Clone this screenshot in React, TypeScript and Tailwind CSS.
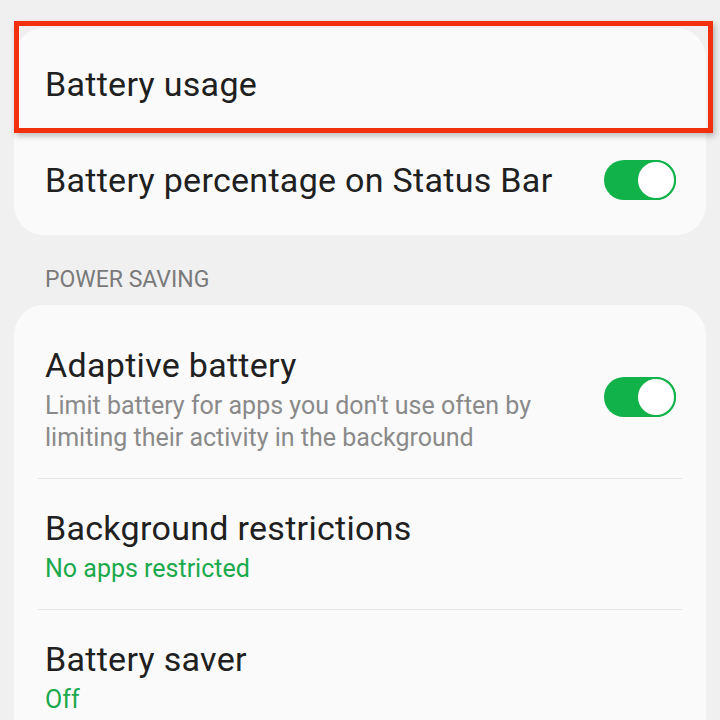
import React from "react";

function Toggle() {
  return (
    <div className="relative h-[40px] w-[72px] shrink-0 rounded-full bg-[#12b24a]">
      <div className="absolute right-0 top-0 h-[40px] w-[40px] rounded-full border-[2px] border-[#12b24a] bg-white" />
    </div>
  );
}

const title = "text-[34px] leading-[50px] tracking-[0.3px] text-[#202020]";
const sub = "text-[25px] leading-[32px]";

export default function App() {
  const font = { fontFamily: "Roboto, 'Noto Sans', sans-serif" };
  return (
    <div className="relative h-[720px] w-[720px] overflow-hidden bg-[#f0f0f0]" style={font}>
      <div className="pl-[14px] pr-[14px] pt-[28px]">
        {/* Card 1 */}
        <div className="rounded-[30px] bg-[#fafafa]">
          <div className="flex h-[112px] items-center px-[31px]">
            <span className={title}>Battery usage</span>
          </div>
          <div className="flex h-[80px] items-center justify-between pl-[31px] pr-[30px]">
            <span className={title}>Battery percentage on Status Bar</span>
            <Toggle />
          </div>
          <div className="h-[15px]" />
        </div>

        {/* Section header */}
        <div className="px-[31px] pt-[30px] pb-[10px]">
          <div className="text-[23px] leading-[30px] text-[#7a7a7a]">POWER SAVING</div>
        </div>

        {/* Card 2 */}
        <div className="rounded-t-[30px] bg-[#fafafa] pt-[11px] pb-[40px]">
          <div className="flex items-center justify-between py-[24px] pl-[31px] pr-[30px]">
            <div className="flex flex-col">
              <span className={title}>Adaptive battery</span>
              <span className={`${sub} text-[#8a8a8a]`}>
                Limit battery for apps you don't use often by
                <br />
                limiting their activity in the background
              </span>
            </div>
            <Toggle />
          </div>
          <div className="mx-[24px] h-px bg-[#e6e6e6]" />
          <div className="flex flex-col py-[24px] px-[31px]">
            <span className={title}>Background restrictions</span>
            <span className={`${sub} text-[#1aa94c]`}>No apps restricted</span>
          </div>
          <div className="mx-[24px] h-px bg-[#e6e6e6]" />
          <div className="flex flex-col py-[24px] px-[31px]">
            <span className={title}>Battery saver</span>
            <span className={`${sub} text-[#1aa94c]`}>Off</span>
          </div>
        </div>
      </div>

      {/* Red annotation rectangle */}
      <div className="absolute left-[14px] top-[21px] h-[112px] w-[699px] border-[5px] border-[#f2300f] shadow-[2px_3px_6px_rgba(0,0,0,0.25)]" />
    </div>
  );
}
